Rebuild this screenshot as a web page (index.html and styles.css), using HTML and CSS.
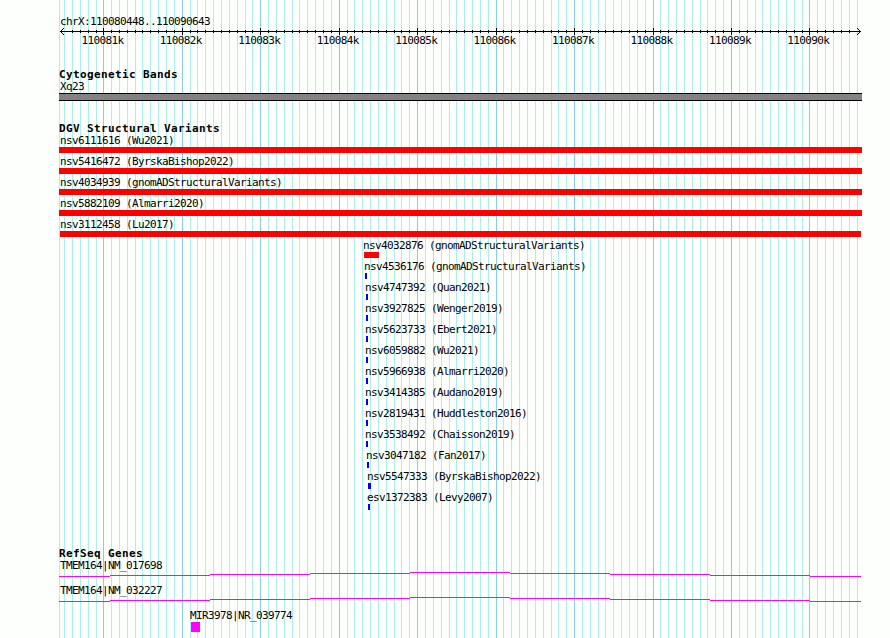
FILE: index.html
```html
<!DOCTYPE html>
<html lang="en">
<head>
    <meta charset="UTF-8">
    <meta name="viewport" content="width=device-width, initial-scale=1.0">
    <title>chrX:110080448..110090643</title>
    <link rel="stylesheet" href="styles.css">
</head>
<body>
    <div class="browser">
        <svg class="grid" width="803" height="638" shape-rendering="crispEdges">
            <path id="grid-minor" class="minor"/>
            <path id="grid-major" class="major"/>
        </svg>

        <div class="ruler">
            <div class="label region">chrX:110080448..110090643</div>
            <svg class="axis" width="803" height="7" shape-rendering="crispEdges">
                <path d="M1 3.5H802"/>
                <path id="ticks-minor"/>
                <path id="ticks-major"/>
                <path d="M2 2.5h1M3 1.5h1M4 0.5h1M2 4.5h1M3 5.5h1M4 6.5h1"/>
                <path d="M800 2.5h1M799 1.5h1M798 0.5h1M800 4.5h1M799 5.5h1M798 6.5h1"/>
            </svg>
            <div class="scale" id="scale"></div>
        </div>

        <div class="track bands">
            <h2>Cytogenetic Bands</h2>
            <div class="label">Xq23</div>
            <div class="band"></div>
        </div>

        <div class="track variants">
            <h2>DGV Structural Variants</h2>
            <div id="variants"></div>
        </div>

        <div class="track genes">
            <h2>RefSeq Genes</h2>
            <div class="gene">
                <div class="label">TMEM164|NM_017698</div>
                <svg class="intron" width="803" height="5" shape-rendering="crispEdges">
                    <path d="M0 4.5H51M51 3.5H151M151 2.5H251M251 1.5H351M351 0.5H451M451 1.5H551M551 2.5H651M651 3.5H751M751 4.5H802"/>
                </svg>
            </div>
            <div class="gene">
                <div class="label">TMEM164|NM_032227</div>
                <svg class="intron" width="803" height="5" shape-rendering="crispEdges">
                    <path d="M0 4.5H51M51 3.5H151M151 2.5H251M251 1.5H351M351 0.5H451M451 1.5H551M551 2.5H651M651 3.5H751M751 4.5H802"/>
                </svg>
            </div>
            <div class="gene mir">
                <div class="label">MIR3978|NR_039774</div>
                <div class="exon"></div>
            </div>
        </div>
    </div>
    <script src="script.js"></script>
</body>
</html>
```

FILE: styles.css
```css
body {
    margin: 0;
    background-color: #fdfffc;
    color: #000;
    font-family: "DejaVu Sans Mono", monospace;
    font-size: 11px;
    overflow: hidden;
}

.browser {
    position: relative;
    width: 803px;
    height: 638px;
    margin-left: 59px;
}

.grid {
    position: absolute;
    top: 0;
    left: 0;
    z-index: -1;
}

.grid path {
    stroke-width: 1;
    fill: none;
}

.minor {
    stroke: #afeeee;
}

.major {
    stroke: #87ceeb;
}

h2 {
    margin: 0;
    height: 12px;
    line-height: 13px;
    font-size: 11px;
    font-weight: bold;
    letter-spacing: 0.378px;
    white-space: pre;
}

.label {
    height: 13px;
    line-height: 13px;
    padding-left: 1px;
    letter-spacing: -0.622px;
    white-space: pre;
}

/* ruler */
.ruler {
    padding-top: 15px;
    height: 53px;
}

.axis {
    display: block;
}

.axis path {
    stroke: #000;
    fill: none;
}

.scale {
    display: flex;
    gap: 36.44px;
    padding-left: 22.4px;
    margin-top: -1px;
}

.scale .label {
    width: 42px;
    padding: 0;
}

/* tracks */
.bands {
    height: 54px;
}

.band {
    box-sizing: border-box;
    height: 8px;
    border-top: 1px solid #000;
    border-bottom: 1px solid #000;
    background-color: #848284;
}

.variants {
    height: 425px;
}

.variant {
    height: 21px;
}

.bar {
    height: 6px;
}

.variant.offset .label {
    padding: 0;
    margin-left: -1px;
}

.loss {
    background-color: #f00;
}

.gain {
    background-color: #00f;
}

.gene {
    height: 25px;
}

.intron {
    display: block;
}

.intron path {
    stroke: #f0f;
}

.mir {
    margin-left: 130px;
}

.mir .label {
    padding-left: 1px;
}

.exon {
    width: 9px;
    height: 10px;
    margin-left: 2px;
    background-color: #f0f;
}
```

FILE: script.js
```js
// left edge of every 100bp column, starting at 110080500
const columns = [
    5, 13, 21, 29, 37, 44, 52, 60, 68, 76, 83, 91, 99, 107, 115, 123, 131,
    138, 146, 154, 162, 170, 178, 186, 193, 201, 209, 217, 225, 233, 240,
    248, 256, 264, 272, 280, 288, 295, 303, 311, 319, 327, 335, 342, 350,
    358, 366, 374, 382, 390, 397, 405, 413, 421, 429, 437, 444, 452, 460,
    468, 476, 484, 492, 499, 507, 515, 523, 531, 539, 546, 554, 562, 570,
    578, 586, 594, 601, 609, 617, 625, 633, 641, 648, 656, 664, 672, 680,
    688, 696, 703, 711, 719, 727, 735, 743, 750, 758, 766, 774, 782, 790,
    798
];

const variants = [
    ["nsv6111616 (Wu2021)", 0, 803, "loss"],
    ["nsv5416472 (ByrskaBishop2022)", 0, 803, "loss"],
    ["nsv4034939 (gnomADStructuralVariants)", 0, 803, "loss"],
    ["nsv5882109 (Almarri2020)", 0, 803, "loss"],
    ["nsv3112458 (Lu2017)", 1, 801, "loss"],
    ["nsv4032876 (gnomADStructuralVariants)", 305, 15, "loss"],
    ["nsv4536176 (gnomADStructuralVariants)", 306, 2, "gain"],
    ["nsv4747392 (Quan2021)", 307, 2, "gain"],
    ["nsv3927825 (Wenger2019)", 307, 2, "gain"],
    ["nsv5623733 (Ebert2021)", 307, 2, "gain"],
    ["nsv6059882 (Wu2021)", 307, 2, "gain"],
    ["nsv5966938 (Almarri2020)", 307, 2, "gain"],
    ["nsv3414385 (Audano2019)", 307, 2, "gain"],
    ["nsv2819431 (Huddleston2016)", 307, 2, "gain"],
    ["nsv3538492 (Chaisson2019)", 307, 2, "gain"],
    ["nsv3047182 (Fan2017)", 308, 2, "gain"],
    ["nsv5547333 (ByrskaBishop2022)", 309, 3, "gain"],
    ["esv1372383 (Levy2007)", 309, 2, "gain"]
];

function drawLines(id, xs, top, bottom) {
    const d = xs.map(x => `M${x + 0.5} ${top}V${bottom}`).join("");
    document.getElementById(id).setAttribute("d", d);
}

const major = columns.filter((x, i) => i % 10 === 5);
const minor = columns.filter((x, i) => i % 10 !== 5);

drawLines("grid-minor", [0].concat(minor), 0, 638);
drawLines("grid-major", major, 0, 638);
drawLines("ticks-minor", minor.slice(1, -1), 2, 5);
drawLines("ticks-major", major, 0, 7);

document.getElementById("scale").innerHTML = major
    .map((x, i) => `<div class="label">${110081 + i}k</div>`)
    .join("");

document.getElementById("variants").innerHTML = variants
    .map(([name, x, width, type]) => {
        const offset = x > 1;
        const pad = offset ? x : 0;
        return `<div class="variant${offset ? " offset" : ""}" style="padding-left: ${pad}px">
            <div class="label">${name}</div>
            <div class="bar ${type}" style="width: ${width}px; margin-left: ${x - pad}px"></div>
        </div>`;
    })
    .join("");
```
